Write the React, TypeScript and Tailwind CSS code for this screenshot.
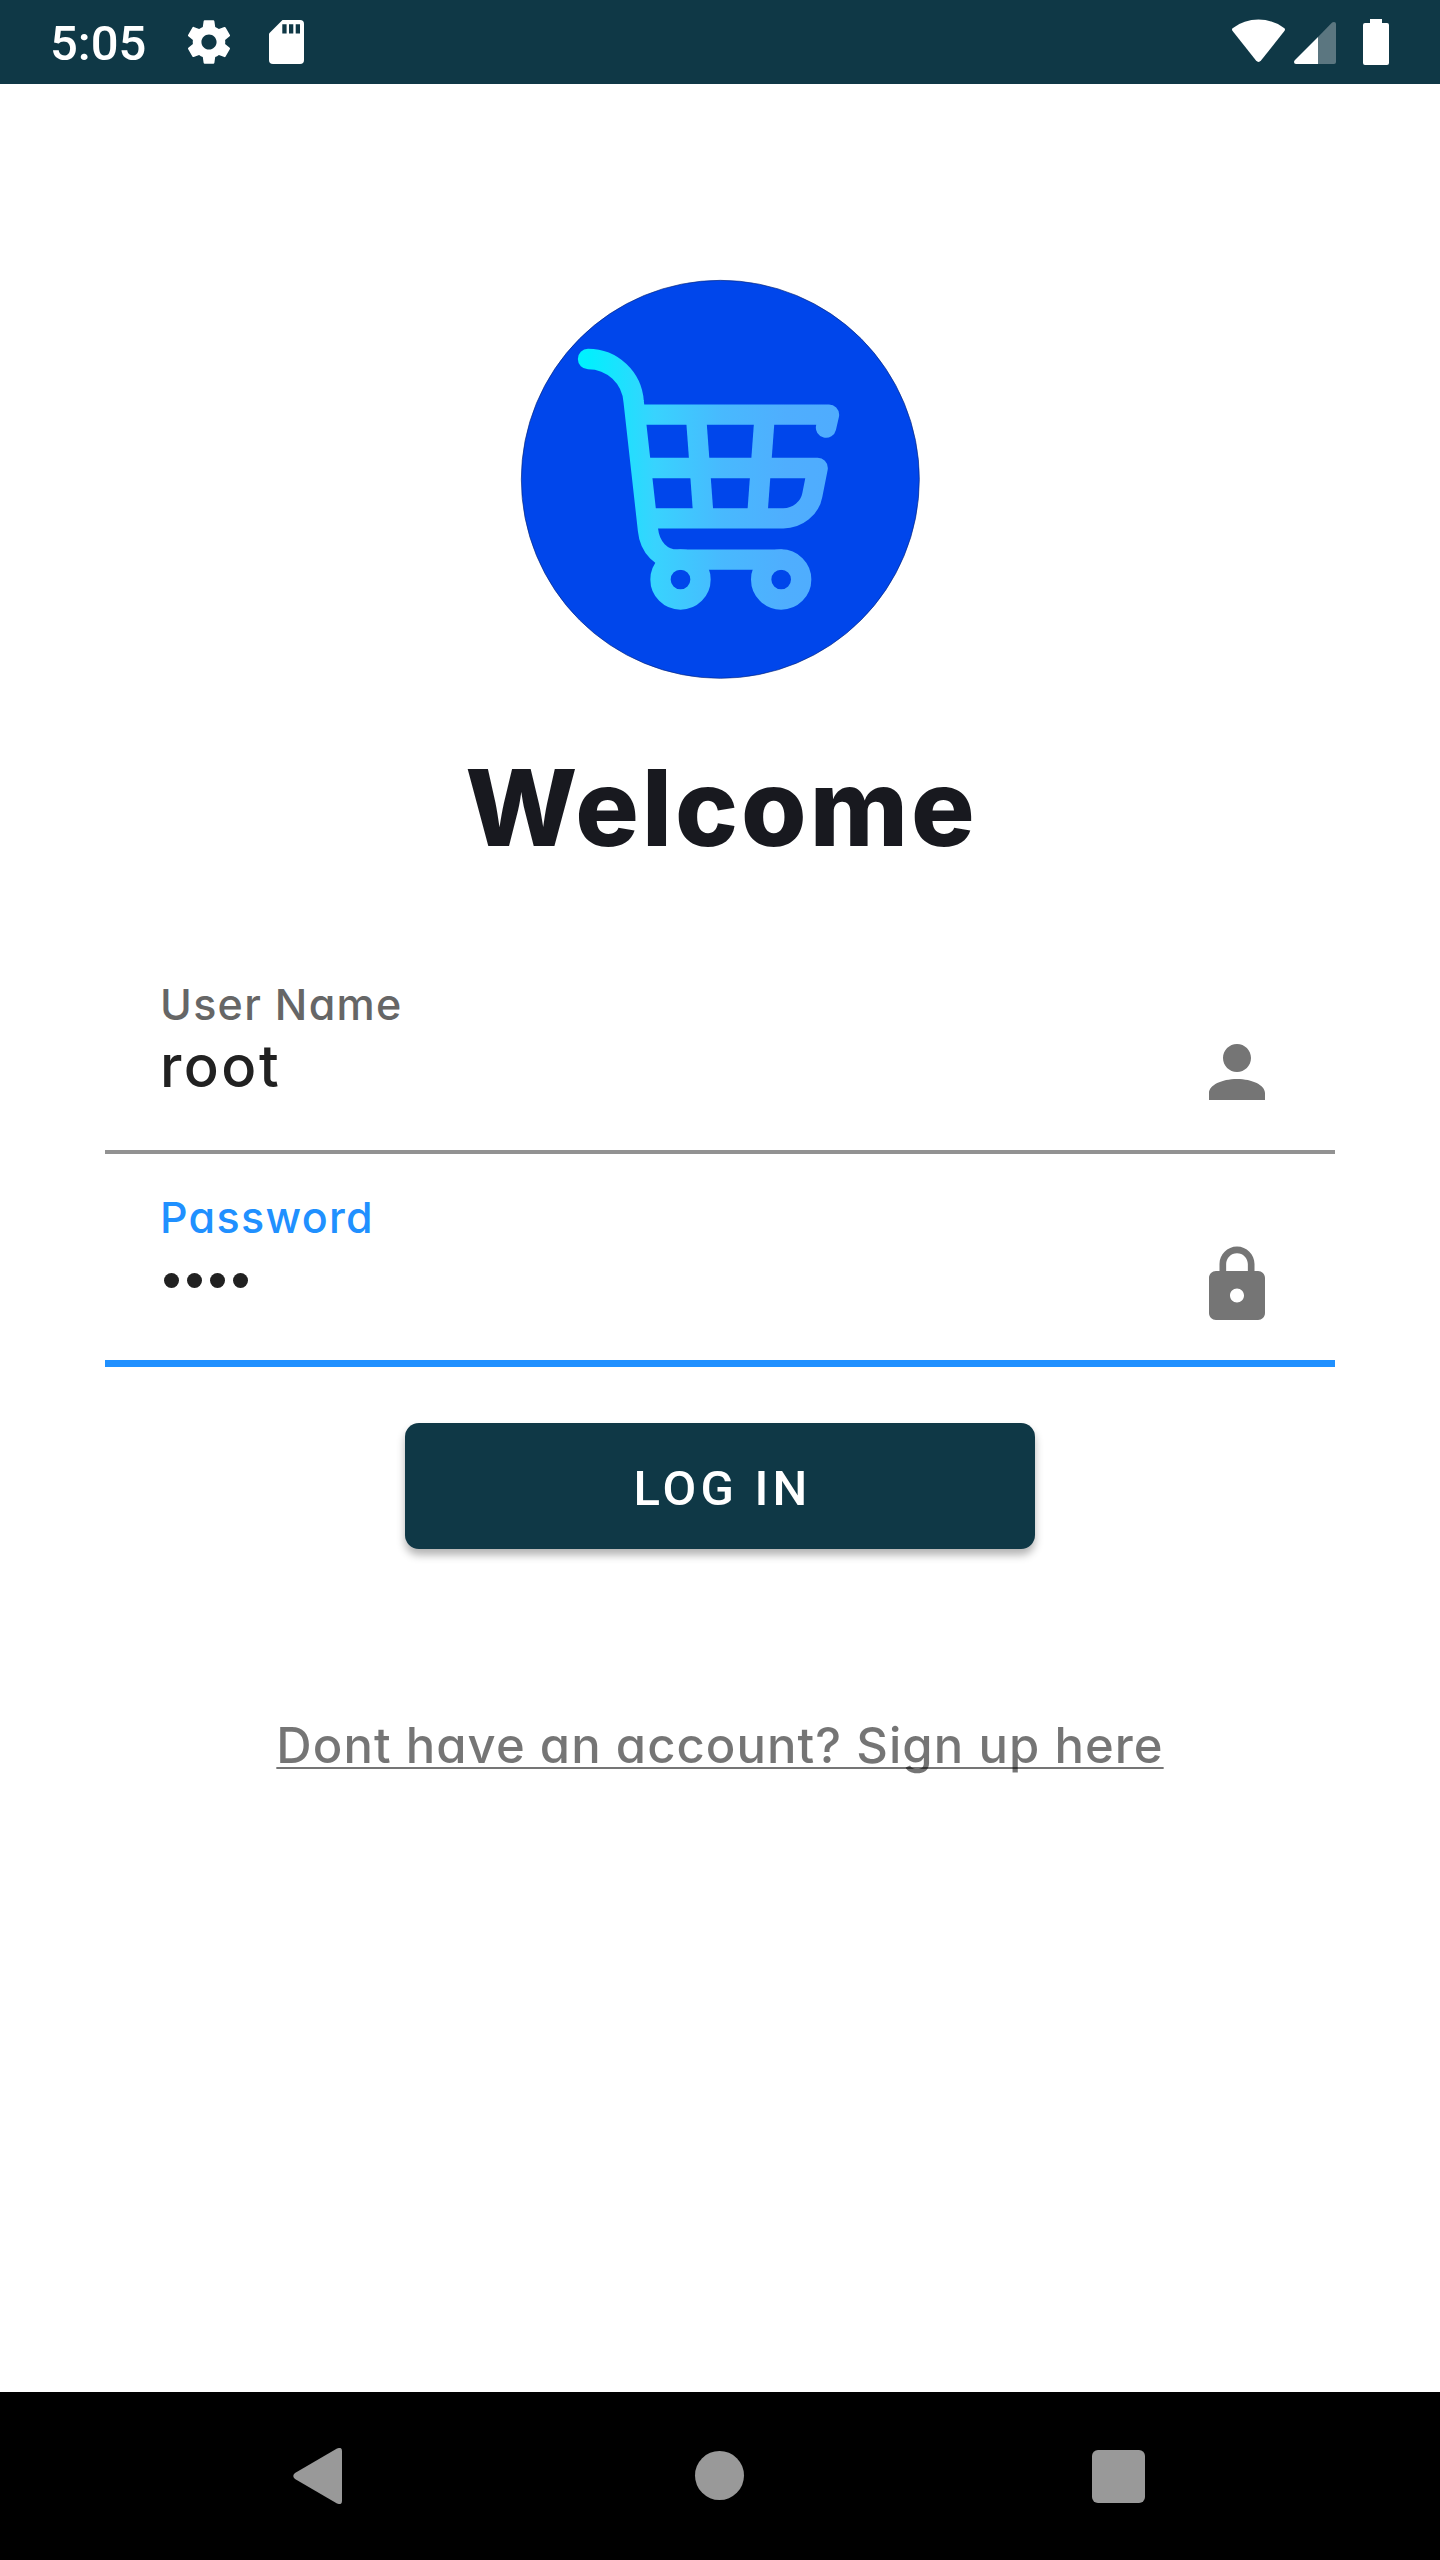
import React from 'react';

const CIRCLE = '#0046EB';

function StatusBar() {
  return (
    <header className="flex h-[84px] items-center justify-between bg-[#0f3846] pl-[50px] pr-[51px]">
      <div className="flex items-center">
        <span className="mt-[4px] w-[98px] font-[Roboto] text-[49px] leading-[84px] font-medium text-white">5:05</span>
        <svg className="ml-[35px] h-[52px] w-[52px]" viewBox="0 0 24 24" fill="#fff">
          <path d="M19.43 12.98c.04-.32.07-.64.07-.98s-.03-.66-.07-.98l2.11-1.65c.19-.15.24-.42.12-.64l-2-3.46c-.12-.22-.39-.3-.61-.22l-2.49 1c-.52-.4-1.08-.73-1.69-.98l-.38-2.65C14.46 2.18 14.25 2 14 2h-4c-.25 0-.46.18-.49.42l-.38 2.65c-.61.25-1.17.59-1.69.98l-2.49-1c-.23-.09-.49 0-.61.22l-2 3.46c-.13.22-.07.49.12.64l2.11 1.65c-.04.32-.07.65-.07.98s.03.66.07.98l-2.11 1.65c-.19.15-.24.42-.12.64l2 3.46c.12.22.39.3.61.22l2.49-1c.52.4 1.08.73 1.69.98l.38 2.65c.03.24.24.42.49.42h4c.25 0 .46-.18.49-.42l.38-2.65c.61-.25 1.17-.59 1.69-.98l2.49 1c.23.09.49 0 .61-.22l2-3.46c.12-.22.07-.49-.12-.64l-2.11-1.65zM12 15.5c-1.93 0-3.5-1.57-3.5-3.5s1.57-3.5 3.5-3.5 3.5 1.57 3.5 3.5-1.57 3.5-3.5 3.5z" />
        </svg>
        <svg className="ml-[34px] h-[44px] w-[35px]" viewBox="0 0 35 44">
          <path fill="#fff" d="M13.5 0H31Q35 0 35 4V40Q35 44 31 44H4Q0 44 0 40V13.5Z" />
          <path fill="#0f3846" d="M13.3 4.3h4.3v9.3h-4.3zM20 4.3h4.3v9.3H20zM26.7 4.3H31v9.3h-4.3z" />
        </svg>
      </div>
      <svg className="h-[46px] w-[157px]" viewBox="1232 19 157 46">
        <path fill="#fff" d="M1232.6 28.2Q1244 19.6 1258.5 19.6T1284.4 28.2Q1285.6 29.4 1284.4 31L1261 60.5Q1258.5 63.4 1256 60.5L1232.6 31Q1231.4 29.4 1232.6 28.2Z" />
        <path fill="#5b7680" d="M1318 37L1331.6 23Q1332.6 22 1334 22 1336 22 1336 24V62Q1336 64 1334 64H1318Z" />
        <path fill="#fff" d="M1318 37V64H1296Q1294 64 1294 62 1294 61 1295 60Z" />
        <path fill="#fff" d="M1370 19h12v4h5q2 0 2 2v38q0 2-2 2h-22q-2 0-2-2V25q0-2 2-2h5z" />
      </svg>
    </header>
  );
}

function CartLogo() {
  return (
    <svg className="h-[420px] w-[420px]" viewBox="0 0 1260 1260" fill="none">
      <defs>
        <linearGradient id="cart" gradientUnits="userSpaceOnUse" x1="204" y1="0" x2="987" y2="0">
          <stop offset="0" stopColor="#00F2FE" />
          <stop offset=".04" stopColor="#03EFFE" />
          <stop offset=".293" stopColor="#38D3FE" />
          <stop offset=".554" stopColor="#48B9FE" />
          <stop offset=".796" stopColor="#4FAEFE" />
          <stop offset="1" stopColor="#4FACFE" />
        </linearGradient>
      </defs>
      <circle cx="631" cy="628" r="597" fill={CIRCLE} stroke="#06267c" strokeWidth="2" />
      <g stroke="url(#cart)" strokeWidth="61" strokeLinecap="round" strokeLinejoin="round">
        <path d="M234 267C308 267 366 324 371 395L414 780C419 832 455 869 502 869H813" />
        <path d="M390 434H957L948 473" />
        <path d="M410 594H923L907 675C900 715 862 745 820 745H425" />
        {/* Flat ends keep the uprights inside the basket rails */}
        <path strokeLinecap="butt" d="M558.5 445L580 735" />
        <path strokeLinecap="butt" d="M763.5 445L742 735" />
        <circle cx="511.5" cy="928.5" r="60" />
        <circle cx="813.5" cy="928.5" r="60" />
      </g>
    </svg>
  );
}

function PersonIcon() {
  return (
    <svg className="h-[84px] w-[84px]" viewBox="0 0 24 24" fill="#757575">
      <path d="M12 12c2.21 0 4-1.79 4-4s-1.79-4-4-4-4 1.79-4 4 1.79 4 4 4zm0 2c-4.42 0-8 1.79-8 4v2h16v-2c0-2.21-3.58-4-8-4z" />
    </svg>
  );
}

function LockIcon() {
  return (
    <svg className="h-[84px] w-[84px]" viewBox="0 0 24 24" fill="#757575">
      <path d="M18 8h-1V6c0-2.76-2.24-5-5-5S7 3.24 7 6v2H6c-1.1 0-2 .9-2 2v10c0 1.1.9 2 2 2h12c1.1 0 2-.9 2-2V10c0-1.1-.9-2-2-2zm-6 9c-1.1 0-2-.9-2-2s.9-2 2-2 2 .9 2 2-.9 2-2 2zm3.1-9H8.9V6c0-1.71 1.39-3.1 3.1-3.1 1.71 0 3.1 1.39 3.1 3.1v2z" />
    </svg>
  );
}

export default function App() {
  return (
    <div className="flex h-[2560px] w-[1440px] flex-col overflow-hidden bg-white font-[Inter,sans-serif] [font-feature-settings:'cv11']">
      <StatusBar />
      <main className="flex flex-1 flex-col items-center pt-[186px]">
        <CartLogo />
        <h1 className="mt-[54px] h-[126px] pl-[3px] text-[106px] leading-[127px] font-extrabold tracking-[3px] whitespace-nowrap text-[#18191f]">
          Welcome
        </h1>

        <div className="mt-[84px] flex h-[200px] w-[1230px] justify-between border-b-4 border-[#929292] pr-[56px] pl-[55px]">
          <div className="flex flex-col">
            <label className="mt-[20px] h-[60px] text-[43px] leading-[60px] font-medium tracking-[1.3px] whitespace-nowrap text-[#666666]">
              User Name
            </label>
            <span className="mt-[2px] h-[60px] text-[58px] leading-[60px] font-medium tracking-[2.5px] text-[#212121]">root</span>
          </div>
          <div className="mt-[76px]">
            <PersonIcon />
          </div>
        </div>

        <div className="flex h-[213px] w-[1230px] justify-between border-b-[7px] border-[#2090ff] pr-[56px] pl-[55px]">
          <div className="flex flex-col">
            <label className="mt-[33px] h-[60px] text-[43px] leading-[60px] font-medium tracking-[1.3px] whitespace-nowrap text-[#2090ff]">
              Password
            </label>
            <div className="mt-[26px] ml-[4px] flex gap-[8px]">
              {[0, 1, 2, 3].map((i) => (
                <span key={i} className="h-[15px] w-[15px] rounded-full bg-[#212121]" />
              ))}
            </div>
          </div>
          <div className="mt-[89px]">
            <LockIcon />
          </div>
        </div>

        <button className="mt-[56px] h-[126px] w-[630px] rounded-[14px] bg-[#0f3846] pt-[5px] pl-[5px] font-[Roboto] text-[49px] font-medium tracking-[4.2px] text-white shadow-[0_6px_8px_rgba(0,0,0,0.3)]">
          LOG IN
        </button>

        <a className="mt-[167px] h-[60px] text-[49px] leading-[60px] font-medium tracking-[1.05px] whitespace-nowrap text-black/54 underline decoration-2 underline-offset-[4px] [text-decoration-skip-ink:none]">
          Dont have an account? Sign up here
        </a>
      </main>

      <nav className="flex h-[168px] items-center justify-between bg-black pr-[295px] pl-[293px]">
        <svg className="h-[56px] w-[49px]" viewBox="0 0 49 56" fill="#999">
          <path d="M44 .6Q49-1.6 49 3V53Q49 57.6 44 55.4L2 31Q-1.5 28 2 25Z" />
        </svg>
        <span className="mb-px ml-[4px] h-[49px] w-[49px] rounded-full bg-[#999]" />
        <span className="h-[53px] w-[53px] rounded-[6px] bg-[#999]" />
      </nav>
    </div>
  );
}
